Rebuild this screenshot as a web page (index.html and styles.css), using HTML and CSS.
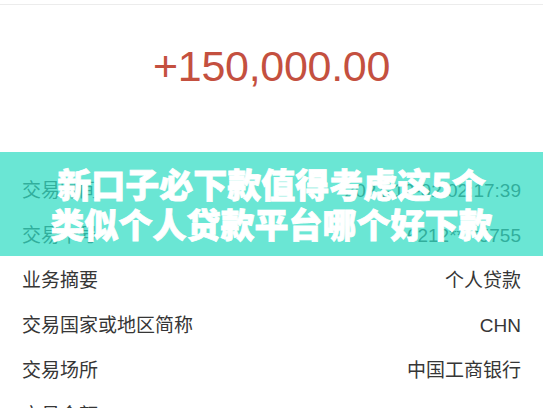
FILE: index.html
```html
<!DOCTYPE html>
<html lang="zh-CN">
<head>
<meta charset="utf-8">
<title>交易详情</title>
<link rel="stylesheet" href="styles.css">
</head>
<body>
<div class="page">
  <div class="topbar"></div>
  <div class="amount"><span class="amount-num">+150,000.00</span></div>
  <ul class="rows">
    <li class="row"><span class="label">交易时间</span><span class="value">2021-12-02 02:17:39</span></li>
    <li class="row"><span class="label">交易卡号</span><span class="value">6212****5755</span></li>
    <li class="row"><span class="label">业务摘要</span><span class="value">个人贷款</span></li>
    <li class="row"><span class="label">交易国家或地区简称</span><span class="value">CHN</span></li>
    <li class="row"><span class="label">交易场所</span><span class="value">中国工商银行</span></li>
    <li class="row"><span class="label">交易金额</span><span class="value">150,000.00</span></li>
  </ul>
  <div class="banner">
    <p class="banner-title">新口子必下款值得考虑这5个<br>类似个人贷款平台哪个好下款</p>
  </div>
</div>
</body>
</html>
```

FILE: styles.css
```css
html, body {
  margin: 0;
  padding: 0;
  background: #ffffff;
}

.page {
  position: relative;
  width: 543px;
  height: 408px;
  overflow: hidden;
  background: #ffffff;
  font-family: "Liberation Sans", "Noto Sans CJK SC", sans-serif;
}

.topbar {
  height: 4px;
  border-bottom: 1px solid #ececec;
}

.amount {
  height: 132px;
  padding-top: 31px;
  text-align: center;
  line-height: 60px;
}

.amount-num {
  display: inline-block;
  font-family: "Liberation Sans", sans-serif;
  font-size: 43px;
  letter-spacing: -0.3px;
  color: #c4503f;
}

.rows {
  list-style: none;
  margin: 0;
  padding: 0;
}

.row {
  display: flex;
  justify-content: space-between;
  align-items: center;
  height: 45px;
  padding: 0 22px;
  font-size: 19px;
  line-height: 1;
  color: #363636;
}

.banner {
  position: absolute;
  top: 152px;
  left: 0;
  right: 0;
  height: 104px;
  background: rgba(48, 220, 195, 0.72);
  display: flex;
  align-items: center;
  justify-content: center;
}

.banner-title {
  margin: 0;
  color: #ffffff;
  font-family: "Noto Sans CJK SC", sans-serif;
  font-weight: 900;
  font-size: 34px;
  line-height: 40px;
  text-align: center;
  -webkit-text-stroke: 0.8px #ffffff;
}
```
